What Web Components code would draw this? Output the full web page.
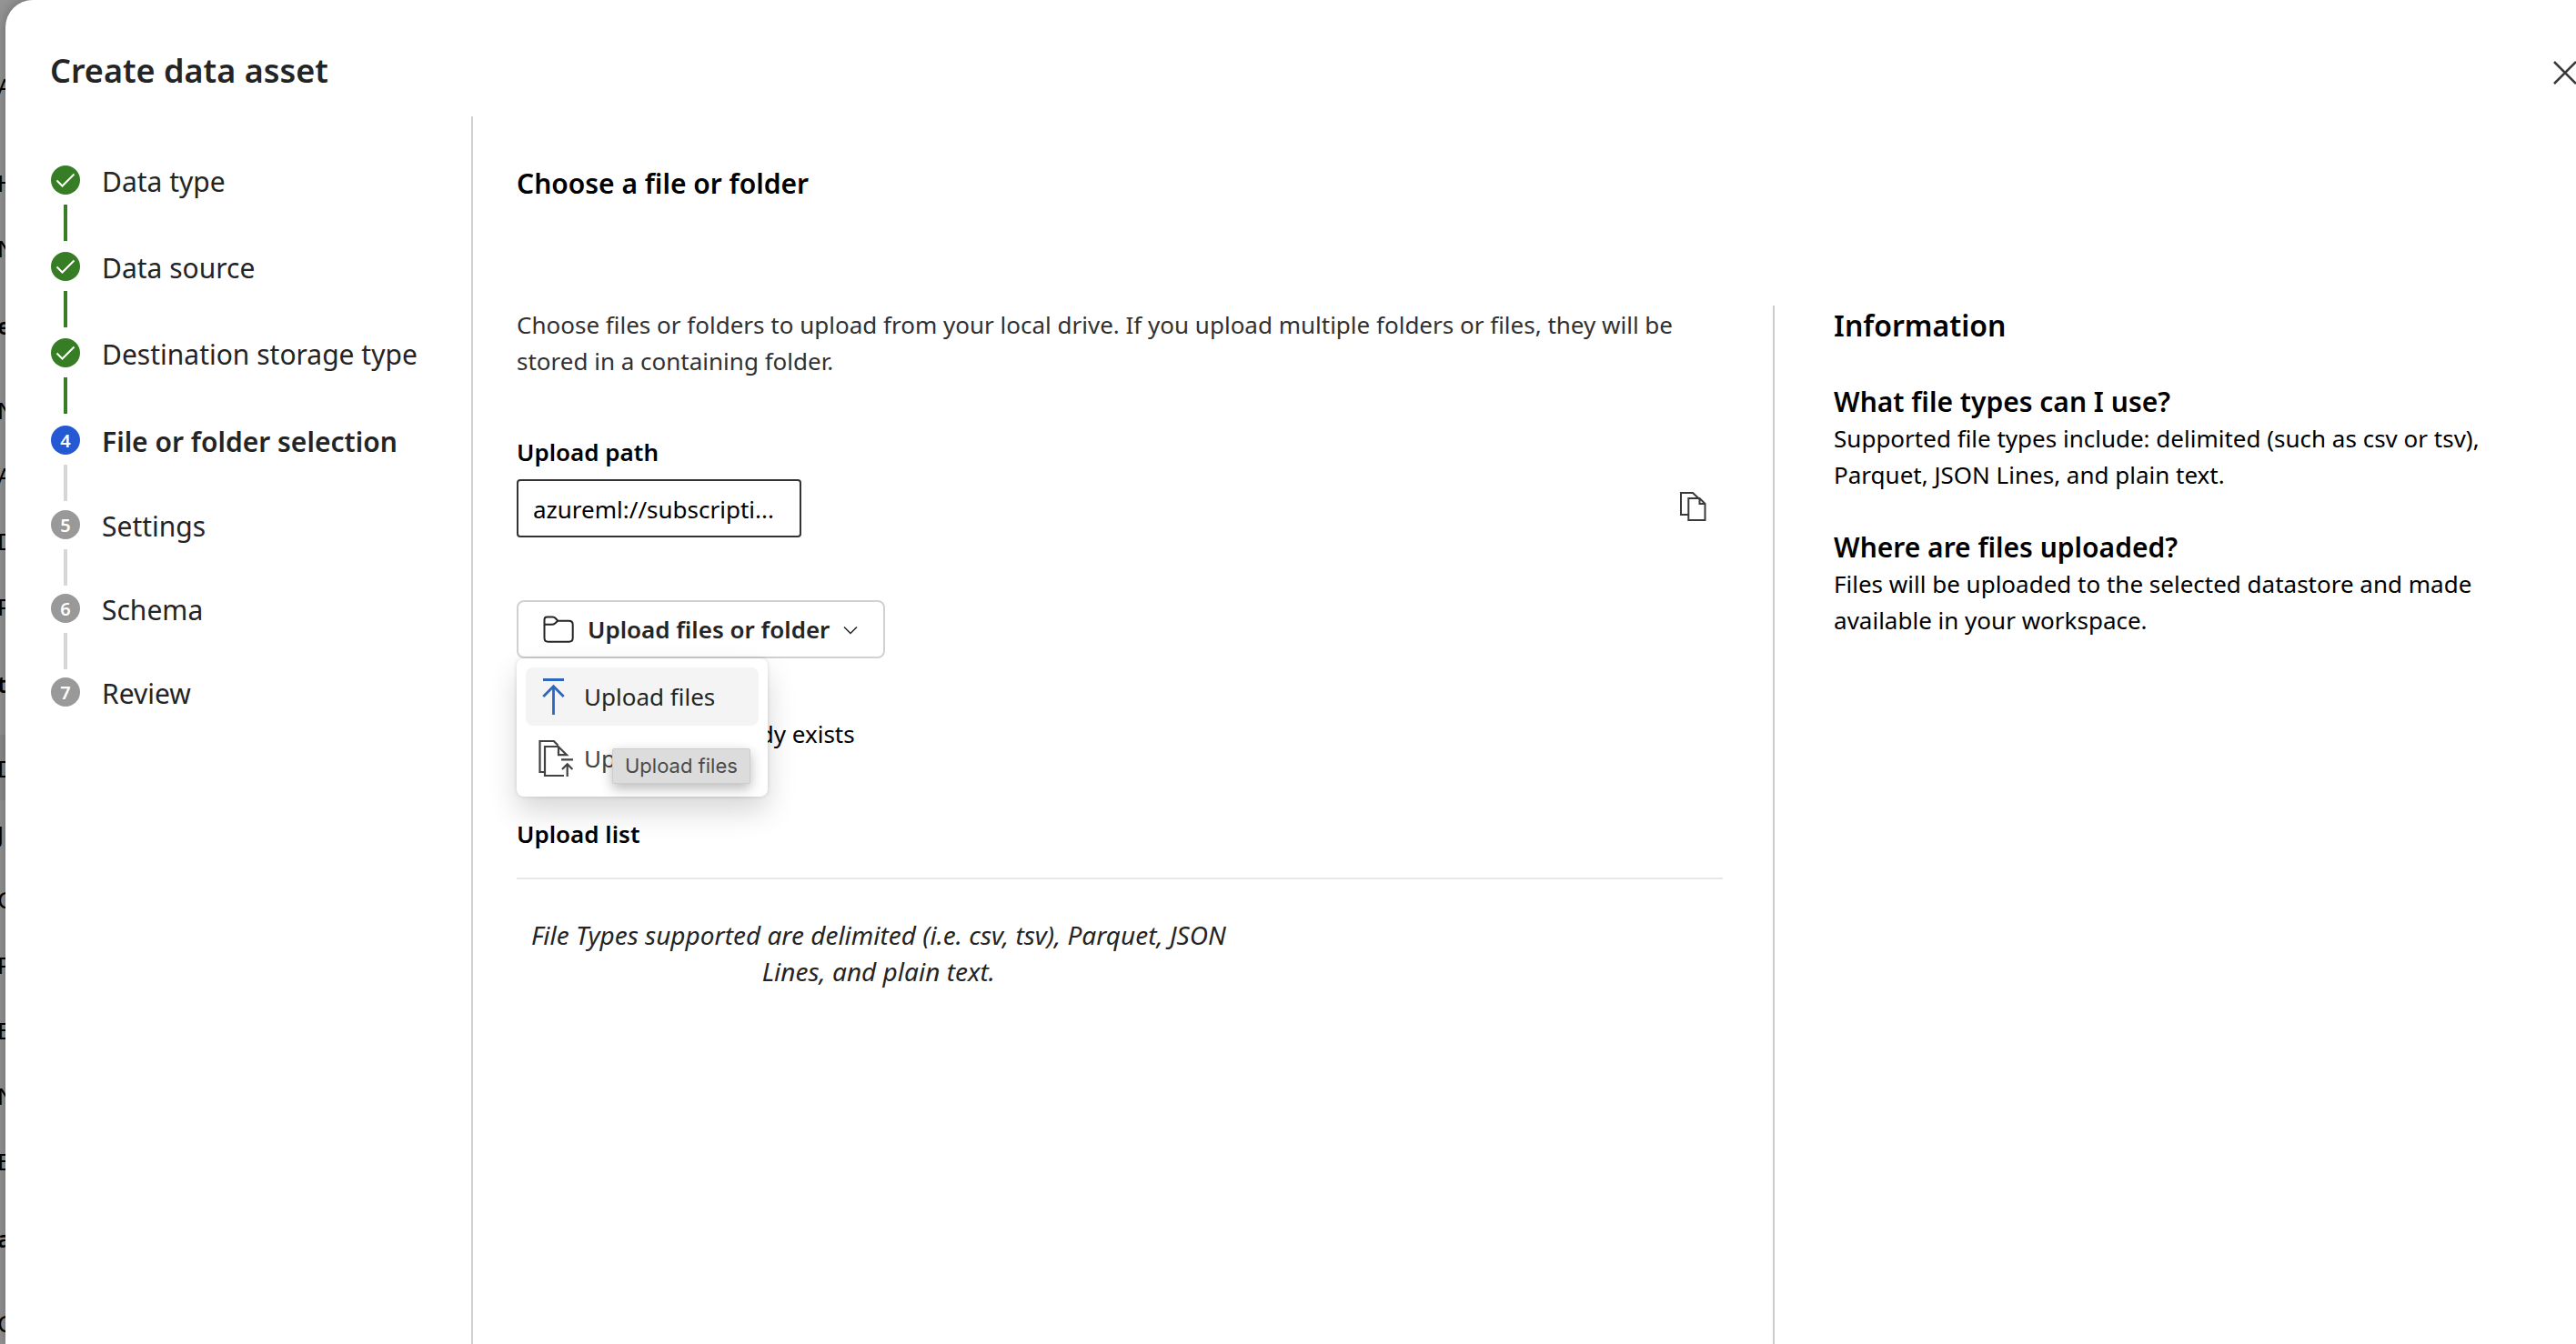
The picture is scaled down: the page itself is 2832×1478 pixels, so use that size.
<!DOCTYPE html>
<html lang="en">
<head>
<meta charset="utf-8">
<title>Create data asset</title>
<style>
  html, body { margin: 0; background: #959595; }
  body { font-family: "Noto Sans", "Open Sans", sans-serif; font-size: 26px; line-height: 40px; color: #000; }
</style>
</head>
<body>
<asset-page></asset-page>
<script>
const define = (name, html) => {
  const template = document.createElement('template');
  template.innerHTML = html;
  customElements.define(name, class extends HTMLElement {
    constructor() {
      super();
      this.attachShadow({ mode: 'open' }).append(template.content.cloneNode(true));
    }
  });
};

/* Dimmed navigation behind the sheet */
define('side-nav', `
<style>
  :host { display: block; overflow: hidden; min-height: 0; padding-top: 58px; box-sizing: border-box; }
  p { margin: 0; line-height: 74px; text-indent: -3px; height: 72px; }
  .top { margin-bottom: 34px; }
  h2 { margin: 0; padding: 14px 0 20px; font-size: 26px; font-weight: 600; line-height: 72px; text-indent: -3px; }
  .on { background: rgba(0,0,0,.06); }
</style>
<p class="top">A</p>
<p>H</p><p>N</p>
<h2>e</h2>
<p>N</p><p>A</p><p>D</p><p>P</p>
<h2>t</h2>
<p class="on">D</p><p>J</p><p>C</p><p>P</p><p>E</p><p>N</p><p>E</p>
<h2>a</h2>
<p>C</p>`);

/* One step of the wizard: state = done | current | todo */
customElements.define('wizard-step', class extends HTMLElement {
  connectedCallback() {
    const state = this.getAttribute('state');
    const mark = state === 'done'
      ? '<svg width="32" height="32" viewBox="0 0 32 32" fill="none" stroke="#fff" stroke-width="2"><path d="M6.500 16.500 12.500 22.500 25.500 9.500"/></svg>'
      : this.getAttribute('number');
    this.attachShadow({ mode: 'open' }).innerHTML = `
<style>
  :host { display: flex; gap: 24px; color: #242424; font-size: 30px; line-height: 36px; }
  .rail { display: flex; flex-direction: column; align-items: center; width: 32px; }
  .dot { width: 32px; height: 32px; border-radius: 50%; background: #999; color: #fff;
         font-size: 20px; font-weight: 600; line-height: 34px; text-align: center; }
  svg { display: block; }
  .line { width: 4px; height: 40px; margin: 11px 0 9px; background: #d6d6d6; }
  :host([state=done]) .dot, :host([state=done]) .line { background: #377d26; }
  :host([state=done]) .line { margin-bottom: 12px; }
  :host([state=current]) { padding-top: 1px; }
  :host([state=current]) .dot { background: #2459d3; }
  :host([state=current]) .line { margin-bottom: 10px; }
  :host([state=current]) .label { font-weight: 600; }
  :host(:last-child) .line { display: none; }
</style>
<div class="rail"><div class="dot">${mark}</div><div class="line"></div></div>
<div class="label"><slot></slot></div>`;
  }
});

define('wizard-steps', `
<style>
  :host { display: block; box-sizing: border-box; width: 514px; flex: none; padding: 54px 24px 0 50px; border-right: 2px solid #d1d1d1; }
</style>
<nav aria-label="Steps">
  <wizard-step state="done">Data type</wizard-step>
  <wizard-step state="done">Data source</wizard-step>
  <wizard-step state="done">Destination storage type</wizard-step>
  <wizard-step state="current" number="4">File or folder selection</wizard-step>
  <wizard-step state="todo" number="5">Settings</wizard-step>
  <wizard-step state="todo" number="6">Schema</wizard-step>
  <wizard-step state="todo" number="7">Review</wizard-step>
</nav>`);

define('upload-menu', `
<style>
  :host { display: block; position: relative; width: max-content; }
  button { font: inherit; color: #242424; margin: 0; cursor: pointer; display: flex; align-items: center; }
  svg { display: block; flex: none; fill: none; }
  .trigger { height: 64px; padding: 0 28px 0 26px; border: 2px solid #d1d1d1; border-radius: 8px; background: #fff; font-weight: 600; }
  .trigger span { margin: 0 15px 0 12px; }
  .menu { position: absolute; top: 64px; left: 0; width: 276px; box-sizing: border-box; padding: 10px; display: flex; flex-direction: column; gap: 4px;
          background: #fff; border-radius: 8px; box-shadow: 0 0 4px rgba(0,0,0,.14), 0 16px 32px rgba(0,0,0,.16); }
  .item { height: 64px; gap: 10px; padding: 0 14px; border: 0; border-radius: 8px; background: none; white-space: nowrap; }
  .item.hover { background: #f4f4f4; }
  .item.dim { color: #424242; }
  .tip { position: absolute; left: 105px; top: 163px; padding: 0 13px; font: 22px/37px Inter, sans-serif; color: #4a4a4a; white-space: nowrap;
         background: #dcdcdc; border: 1px solid #cdcdcd; border-radius: 2px; box-shadow: 0 5px 14px rgba(0,0,0,.28); }
</style>
<button class="trigger" aria-haspopup="menu" aria-expanded="true">
  <svg width="38" height="36" viewBox="0 0 38 36" stroke="#242424" stroke-width="2">
    <path d="M2.500 12V7.500Q2.500 4.500 5.500 4.500H11.500Q13.500 4.500 14.800 6L17.300 8.700H29.500Q33.700 8.700 33.700 12.700V27.500Q33.700 31.700 29.500 31.700H6.500Q2.500 31.700 2.500 27.500V12.800H10.500Q12.800 12.800 14.200 11.500L17.300 8.700"/>
  </svg>
  <span>Upload files or folder</span>
  <svg width="16" height="16" viewBox="0 0 16 16" stroke="#242424" stroke-width="1.500"><path d="M1 5.500 8 12.500 15 5.500"/></svg>
</button>
<div class="menu" role="menu">
  <button class="item hover" role="menuitem">
    <svg width="40" height="40" viewBox="0 0 40 40" stroke="#2b67be" stroke-width="2.800"><path d="M5 1.500H28M16.500 40V8M5.300 20 16.500 8.800 27.700 20"/></svg>
    Upload files
  </button>
  <button class="item dim" role="menuitem">
    <svg width="40" height="40" viewBox="0 0 40 40" stroke="#424242" stroke-width="2.200">
      <path d="M6.500 35H1.500V1H16.800L21.500 5.800M28 39H7V7H21.800L31 16.200H22V7M25 21.300H38M31.700 40V26M26 32 31.700 26.200 37.400 32"/>
    </svg>
    Upload folder
  </button>
</div>
<div class="tip" role="tooltip">Upload files</div>`);

define('upload-form', `
<style>
  :host { display: block; }
  p { margin: 0; }
  .intro { color: #323130; margin: 1px 0 60px; }
  .name { display: block; font-weight: 600; margin-bottom: 10px; }
  .path { display: flex; justify-content: space-between; margin-bottom: 69px; }
  .path input { box-sizing: border-box; width: 313px; height: 64px; padding: 2px 16px 0; border: 2px solid #333; border-radius: 4px; background: #fff; font: inherit; color: #000; }
  .path button { width: 64px; height: 64px; padding: 0; border: 0; background: none; display: grid; place-items: center; }
  svg { display: block; fill: none; }
  upload-menu { margin-bottom: 63px; z-index: 1; }
  .check { display: flex; align-items: center; gap: 24px; margin-bottom: 70px; }
  .check input { width: 32px; height: 32px; margin: 0; }
  h2 { margin: 0; padding-bottom: 28px; border-bottom: 2px solid #e8e8e8; font-size: 26px; font-weight: 600; line-height: 40px; }
  .empty { width: 60%; margin-top: 41px; font-size: 28px; font-style: italic; color: #242424; text-align: center; }
</style>
<p class="intro">Choose files or folders to upload from your local drive. If you upload multiple folders or files, they will be stored in a containing folder.</p>
<label class="name" for="path">Upload path</label>
<div class="path">
  <input id="path" type="text" readonly value="azureml://subscripti...">
  <button aria-label="Copy upload path">
    <svg width="36" height="36" viewBox="0 0 36 36" stroke="#3b3a39" stroke-width="2"><path d="M12 25H4V1H17L24 7.500M12.300 7H24.500L30.500 13V31H12.300ZM24.500 7V13H30.500"/></svg>
  </button>
</div>
<upload-menu></upload-menu>
<div class="check"><input id="overwrite" type="checkbox"><label for="overwrite">Overwrite if already exists</label></div>
<h2>Upload list</h2>
<p class="empty">File Types supported are delimited (i.e. csv, tsv), Parquet, JSON Lines, and plain text.</p>`);

define('info-panel', `
<style>
  :host { display: block; border-left: 2px solid #ccc; padding: 0 64px 0 65px; }
  h2 { margin: 0 0 42px; font-size: 32px; line-height: 44px; font-weight: 600; }
  h3 { margin: 0; font-size: 30px; line-height: 40px; font-weight: 600; }
  p { margin: 0 0 40px; }
</style>
<h2>Information</h2>
<h3>What file types can I use?</h3>
<p>Supported file types include: delimited (such as csv or tsv), Parquet, JSON Lines, and plain text.</p>
<h3>Where are files uploaded?</h3>
<p>Files will be uploaded to the selected datastore and made available in your workspace.</p>`);

define('asset-sheet', `
<style>
  :host { display: flex; flex-direction: column; min-width: 0; background: #fff; border-top-left-radius: 30px; box-shadow: 0 0 16px rgba(0,0,0,.3); }
  header { display: flex; align-items: center; justify-content: space-between; padding: 50px 0 22px 49px; }
  h1 { margin: 0; font-size: 36px; line-height: 56px; font-weight: 600; color: #242424; }
  header button { padding: 0; border: 0; background: none; }
  svg { display: block; fill: none; }
  .body { flex: 1; display: flex; min-height: 0; }
  main { flex: 1; min-width: 0; display: flex; flex-direction: column; padding: 52px 0 0 48px; }
  main > h2 { margin: 0 0 112px; font-size: 30px; line-height: 44px; font-weight: 600; }
  .columns { flex: 1; display: grid; grid-template-columns: minmax(0, 1fr) 39%; gap: 55px; }
</style>
<header>
  <h1>Create data asset</h1>
  <button aria-label="Close"><svg width="26" height="30" viewBox="0 0 26 30" stroke="#3b3a39" stroke-width="2.500"><path d="M2 5 26 29M26 5 2 29"/></svg></button>
</header>
<div class="body">
  <wizard-steps></wizard-steps>
  <main>
    <h2>Choose a file or folder</h2>
    <div class="columns">
      <upload-form></upload-form>
      <info-panel></info-panel>
    </div>
  </main>
</div>`);

define('asset-page', `
<style>
  :host { display: grid; grid-template-columns: 6px minmax(0, 1fr); height: 100vh; }
</style>
<side-nav></side-nav>
<asset-sheet></asset-sheet>`);
</script>
</body>
</html>
